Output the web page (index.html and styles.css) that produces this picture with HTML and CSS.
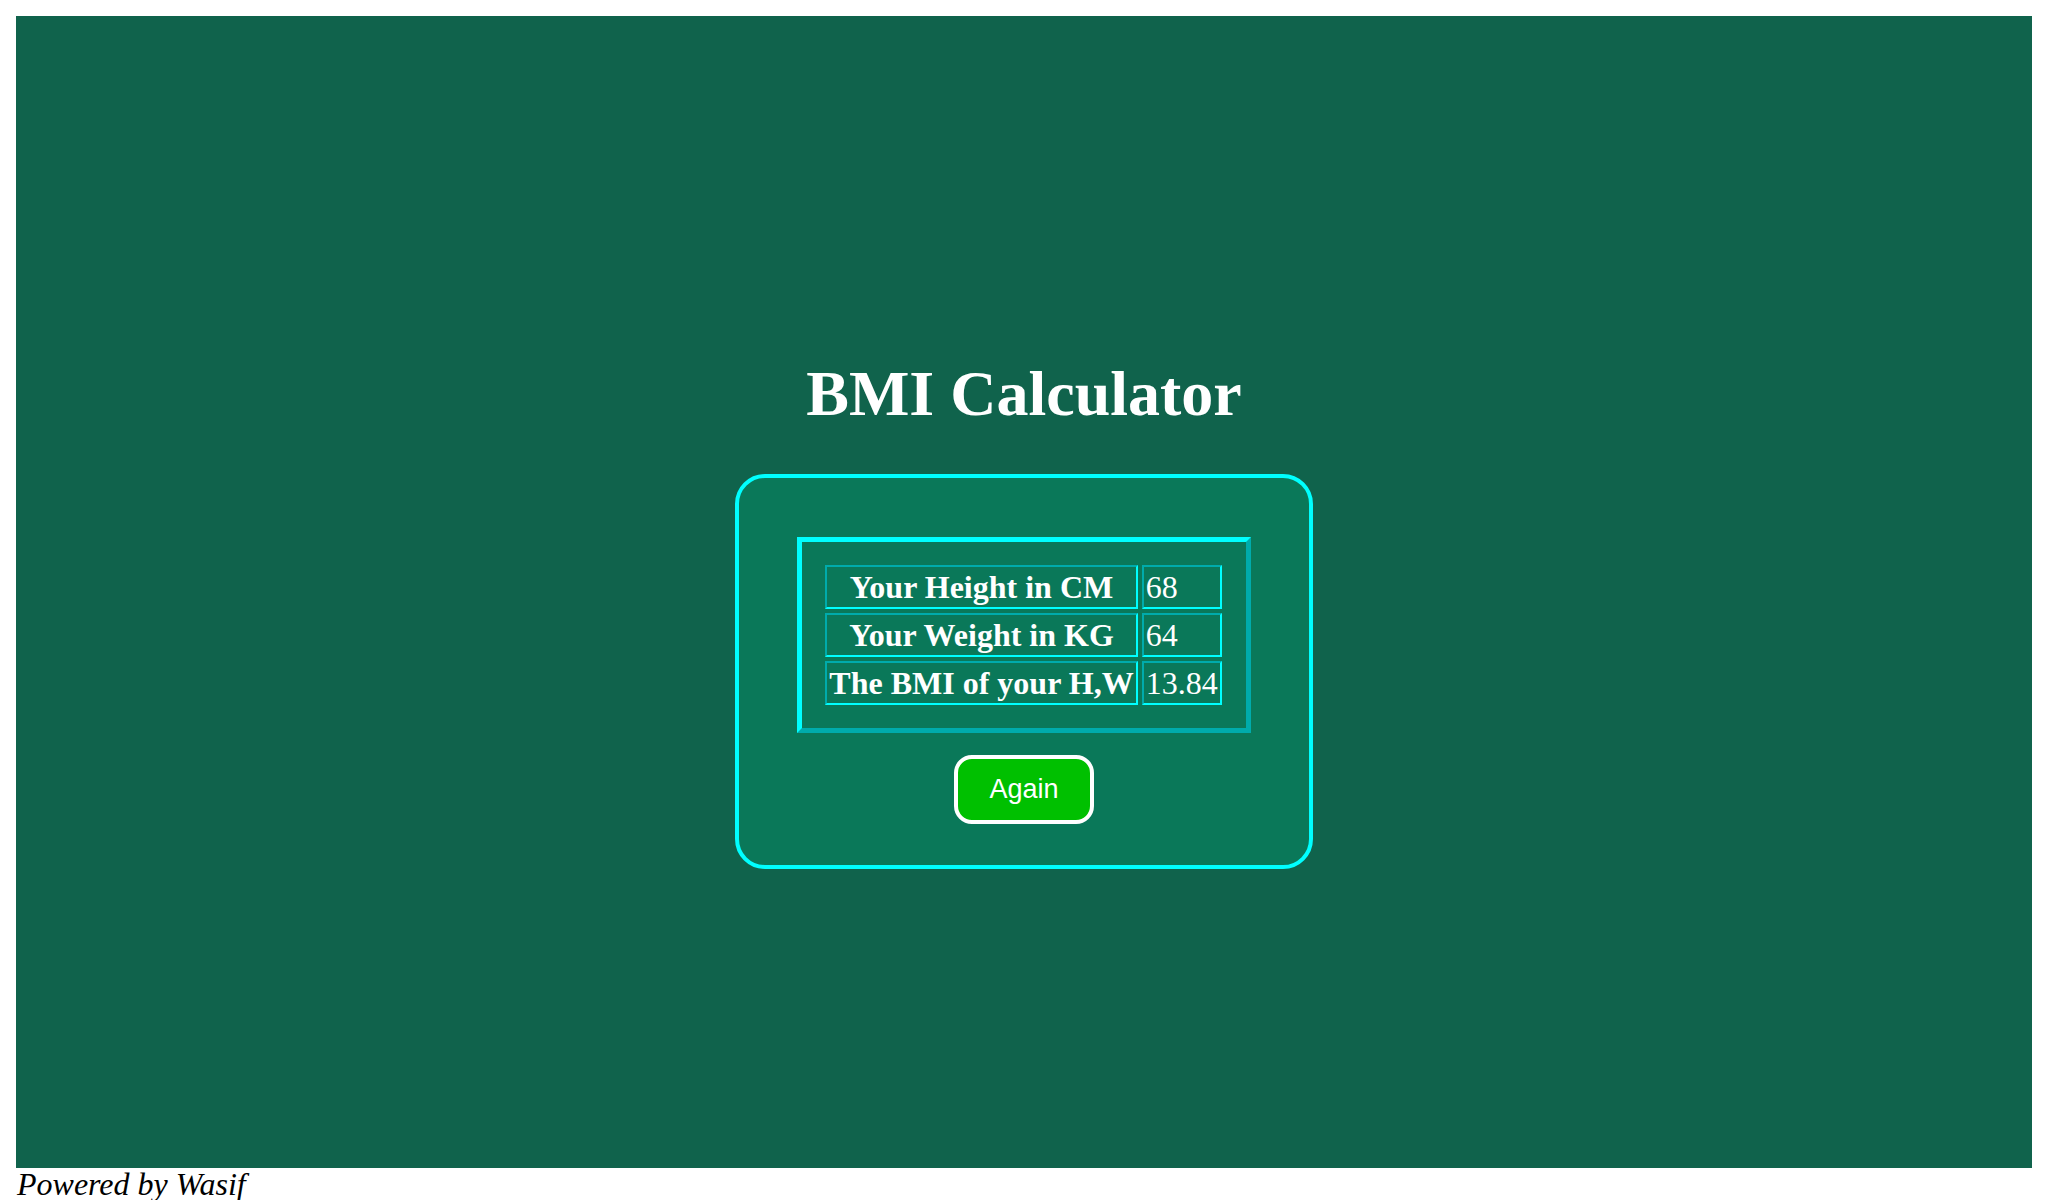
FILE: index.html
```html
<!DOCTYPE html>
<html lang="en">
<head>
<meta charset="utf-8">
<title>BMI Calculator</title>
<link rel="stylesheet" href="styles.css">
</head>
<body>
  <main class="stage">
    <h1 class="title">BMI Calculator</h1>
    <section class="card">
      <table class="bmi-table">
        <tr><th>Your Height in CM</th><td>68</td></tr>
        <tr><th>Your Weight in KG</th><td>64</td></tr>
        <tr><th>The BMI of your H,W</th><td>13.84</td></tr>
      </table>
      <button class="again" type="button">Again</button>
    </section>
  </main>
  <footer class="credit">Powered by Wasif</footer>
</body>
</html>
```

FILE: styles.css
```css
html, body {
  margin: 0;
  padding: 0;
  background: #ffffff;
}

body {
  padding: 16px;
  font-family: "Liberation Serif", "Times New Roman", serif;
}

.stage {
  height: 1152px;
  box-sizing: border-box;
  background: #10634c;
  display: flex;
  flex-direction: column;
  align-items: center;
  padding-top: 342px;
}

.title {
  margin: 0;
  font-size: 64px;
  line-height: 72px;
  font-weight: bold;
  color: #ffffff;
}

.card {
  margin-top: 44px;
  width: 578px;
  box-sizing: border-box;
  border: 4px solid #00ffff;
  border-radius: 30px;
  background: #0a7859;
  padding: 59px 0 41px;
  display: flex;
  flex-direction: column;
  align-items: center;
  gap: 22px;
}

.bmi-table {
  border: 5px outset #00ffff;
  border-collapse: separate;
  border-spacing: 4px;
  padding: 19px 20px 19px 19px;
  color: #ffffff;
  font-size: 32px;
}

.bmi-table th,
.bmi-table td {
  border: 2px inset #00ffff;
  padding: 1px 2px;
  line-height: 38px;
}

.bmi-table th {
  font-weight: bold;
  text-align: center;
}

.bmi-table td {
  font-weight: normal;
  text-align: left;
  min-width: 72px;
}

.again {
  width: 140px;
  height: 69px;
  box-sizing: border-box;
  border: 4px solid #ffffff;
  border-radius: 18px;
  background: #00c000;
  color: #ffffff;
  font-family: "Liberation Sans", Arial, sans-serif;
  font-size: 27px;
  padding: 0;
}

.credit {
  font-style: italic;
  font-size: 32px;
  line-height: 33px;
  color: #000000;
  padding-left: 1px;
}
```
